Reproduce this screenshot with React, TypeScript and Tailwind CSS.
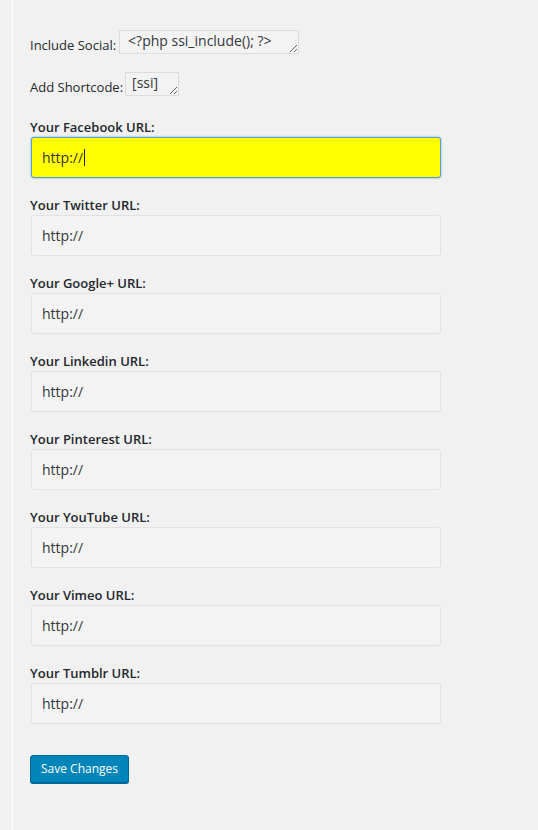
const fields = ['Facebook', 'Twitter', 'Google+', 'Linkedin', 'Pinterest', 'YouTube', 'Vimeo', 'Tumblr']

function UrlField({ name, focused }: { name: string; focused?: boolean }) {
  return (
    <div className="mb-[18px]">
      <div className="text-[13px] leading-[18px] font-semibold text-[#23282d] mb-px">Your {name} URL:</div>
      <div
        className={
          focused
            ? 'ml-px w-[410px] h-[41px] flex items-center px-[10px] rounded-[3px] border border-[#5b9dd9] bg-[#ffff00] shadow-[0_0_2px_rgba(30,140,190,0.8)]'
            : 'ml-px w-[410px] h-[41px] flex items-center px-[10px] rounded-[3px] border border-[#e2e2e2] bg-[#f3f3f3]'
        }
      >
        <span className="text-[14px] text-[#32373c]">http://</span>
        {focused && <span className="inline-block w-px h-[17px] bg-[#222] ml-px" />}
      </div>
    </div>
  )
}

export default function App() {
  return (
    <div className="min-h-[830px] bg-[#f1f1f1] font-['Open_Sans',sans-serif]">
      <div className="ml-[12px] min-h-[830px] border-l border-white pl-[17px] pt-[30px]">
        <div className="flex items-end mb-[18px]">
          <span className="text-[13px] leading-[16px] text-[#23282d] mr-[3px] mb-px">Include Social:</span>
          <textarea
            readOnly
            value="<?php ssi_include(); ?>"
            className="w-[180px] h-[24px] px-[8px] pt-[1px] text-[14px] leading-[18px] text-[#32373c] bg-[#f3f3f3] border border-[#dcdcdc] overflow-hidden outline-none"
          />
        </div>
        <div className="flex items-end mb-[22px]">
          <span className="text-[13px] leading-[16px] text-[#23282d] mr-[2px] mb-px">Add Shortcode:</span>
          <textarea
            readOnly
            value="[ssi]"
            className="w-[54px] h-[24px] px-[6px] pt-[1px] text-[14px] leading-[18px] text-[#32373c] bg-[#f3f3f3] border border-[#dcdcdc] overflow-hidden outline-none"
          />
        </div>
        {fields.map((f, i) => (
          <UrlField key={f} name={f} focused={i === 0} />
        ))}
        <button className="mt-[13px] h-[28px] px-[10px] rounded-[3px] bg-[#0085ba] border border-[#006799] shadow-[0_1px_0_#006799] text-white text-[12px]">
          Save Changes
        </button>
      </div>
    </div>
  )
}
